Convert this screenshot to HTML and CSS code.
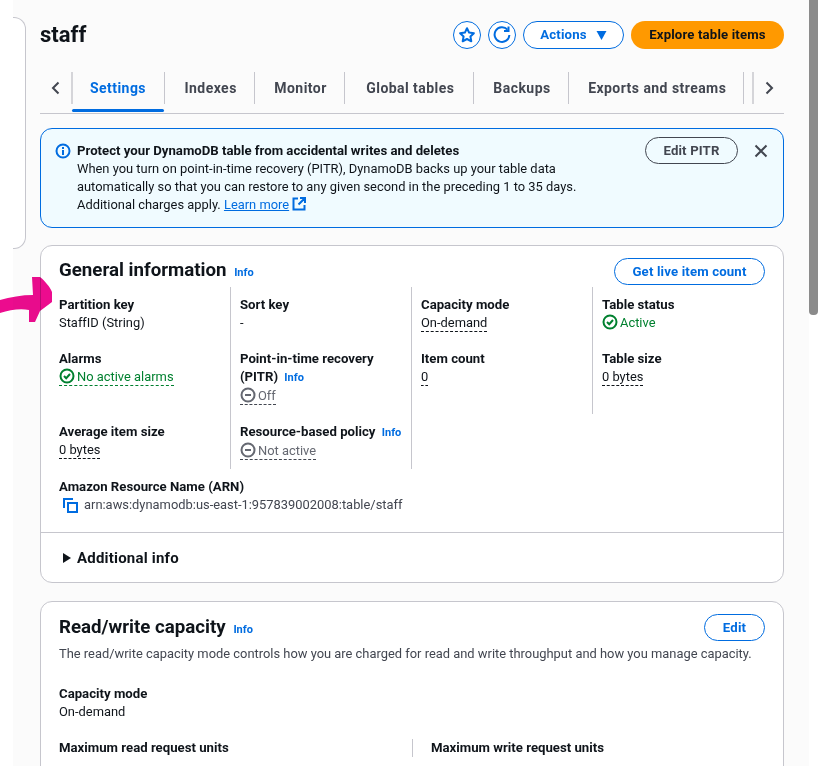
FILE: index.html
```html
<!DOCTYPE html>
<html lang="en">
<head>
<meta charset="utf-8">
<title>staff</title>
<link rel="stylesheet" href="styles.css">
</head>
<body>
<div class="window">
  <div class="canvas">
    <aside class="side"></aside>
    <main class="main">
      <header class="head">
        <h1>staff</h1>
        <div class="head-actions">
          <button class="btn round"><svg width="18" height="18" viewBox="0 0 18 18"><path d="M9 2.200l2.100 4.400 4.800.6-3.500 3.300.9 4.800L9 13l-4.300 2.300.9-4.800L2.100 7.200l4.800-.6z" fill="none" stroke="#006ce0" stroke-width="2" stroke-linejoin="round"/></svg></button>
          <button class="btn round"><svg width="20" height="20" viewBox="0 0 20 20"><path d="M15.500 4.600A7.400 7.400 0 1 0 17.400 10" fill="none" stroke="#006ce0" stroke-width="2"/><path d="M16.500 1.500v4.500H12" fill="none" stroke="#006ce0" stroke-width="2"/></svg></button>
          <button class="btn actions">Actions <svg width="11" height="9" viewBox="0 0 11 9"><path d="M.5 0h10L5.500 9z" fill="#006ce0"/></svg></button>
          <button class="btn primary">Explore table items</button>
        </div>
      </header>
      <nav class="tabs">
        <span class="tab-arrow left"><svg width="10" height="14" viewBox="0 0 10 14"><path d="M7.500 1.500 2 7l5.500 5.500" fill="none" stroke="#424650" stroke-width="2"/></svg></span>
        <a class="tab active">Settings</a>
        <a class="tab">Indexes</a>
        <a class="tab">Monitor</a>
        <a class="tab global">Global tables</a>
        <a class="tab">Backups</a>
        <a class="tab">Exports and streams</a>
        <span class="tab-arrow right"><svg width="10" height="14" viewBox="0 0 10 14"><path d="M2.500 1.500 8 7l-5.500 5.500" fill="none" stroke="#424650" stroke-width="2"/></svg></span>
      </nav>
      <section class="flash">
        <svg class="flash-icon" width="16" height="16" viewBox="0 0 16 16"><circle cx="8" cy="8" r="6.500" fill="none" stroke="#006ce0" stroke-width="2"/><path d="M8 7v5M8 4v2" stroke="#006ce0" stroke-width="2"/></svg>
        <div class="flash-body">
          <strong>Protect your DynamoDB table from accidental writes and deletes</strong>
          <p>When you turn on point-in-time recovery (PITR), DynamoDB backs up your table data automatically so that you can restore to any given second in the preceding 1 to 35 days. Additional charges apply. <a class="link">Learn more</a> <svg class="ext" width="14" height="14" viewBox="0 0 14 14"><path d="M6 1.500H1.500v11h11V8M8 1h5v5M13 1 6.500 7.500" fill="none" stroke="#006ce0" stroke-width="2"/></svg></p>
        </div>
        <button class="btn pitr">Edit PITR</button>
        <svg class="close" width="14" height="14" viewBox="0 0 14 14"><path d="M1.500 1.500l11 11M12.500 1.500l-11 11" stroke="#424650" stroke-width="2"/></svg>
      </section>
      <section class="card general">
        <div class="card-pad">
          <div class="card-head">
            <h2>General information <a class="info">Info</a></h2>
            <button class="btn normal">Get live item count</button>
          </div>
          <div class="grid">
            <div class="cell first"><b>Partition key</b><span>StaffID (String)</span></div>
            <div class="cell"><b>Sort key</b><span>-</span></div>
            <div class="cell"><b>Capacity mode</b><span><u>On-demand</u></span></div>
            <div class="cell last"><b>Table status</b><span class="ok"><svg class="st" width="16" height="16" viewBox="0 0 16 16"><circle cx="8" cy="8" r="6.500" fill="none" stroke="#00802f" stroke-width="2"/><path d="M5 8l2.200 2.200L11 6" fill="none" stroke="#00802f" stroke-width="2"/></svg>Active</span></div>

            <div class="cell first"><b>Alarms</b><span class="ok"><u class="green"><svg class="st" width="16" height="16" viewBox="0 0 16 16"><circle cx="8" cy="8" r="6.500" fill="none" stroke="#00802f" stroke-width="2"/><path d="M5 8l2.200 2.200L11 6" fill="none" stroke="#00802f" stroke-width="2"/></svg>No active alarms</u></span></div>
            <div class="cell"><b>Point-in-time recovery (PITR) <a class="info">Info</a></b><span class="off"><u><svg class="st" width="16" height="16" viewBox="0 0 16 16"><circle cx="8" cy="8" r="6.500" fill="none" stroke="#656871" stroke-width="2"/><path d="M5 8h6" stroke="#656871" stroke-width="2"/></svg>Off</u></span></div>
            <div class="cell"><b>Item count</b><span><u>0</u></span></div>
            <div class="cell last"><b>Table size</b><span><u>0 bytes</u></span></div>

            <div class="cell first"><b>Average item size</b><span><u>0 bytes</u></span></div>
            <div class="cell"><b>Resource-based policy <a class="info">Info</a></b><span class="off"><u><svg class="st" width="16" height="16" viewBox="0 0 16 16"><circle cx="8" cy="8" r="6.500" fill="none" stroke="#656871" stroke-width="2"/><path d="M5 8h6" stroke="#656871" stroke-width="2"/></svg>Not active</u></span></div>
          </div>
          <div class="arn">
            <b>Amazon Resource Name (ARN)</b>
            <span class="arn-val"><svg width="15" height="15" viewBox="0 0 15 15"><path d="M1 10V1h9" fill="none" stroke="#006ce0" stroke-width="2"/><path d="M5 5h9v9H5z" fill="none" stroke="#006ce0" stroke-width="2"/></svg>arn:aws:dynamodb:us-east-1:957839002008:table/staff</span>
          </div>
        </div>
        <div class="expander"><svg width="9" height="10" viewBox="0 0 9 10"><path d="M1 0l8 5-8 5z" fill="#0f141a"/></svg><span>Additional info</span></div>
      </section>
      <section class="card capacity">
        <div class="card-head">
          <h2>Read/write capacity <a class="info">Info</a></h2>
          <button class="btn normal edit">Edit</button>
        </div>
        <p class="desc">The read/write capacity mode controls how you are charged for read and write throughput and how you manage capacity.</p>
        <div class="cap-row"><b>Capacity mode</b><span>On-demand</span></div>
        <div class="cap-cols">
          <div class="cap-col"><b>Maximum read request units</b></div>
          <div class="cap-col second"><b>Maximum write request units</b></div>
        </div>
      </section>
    </main>
  </div>
  <div class="scrollbar"><div class="thumb"></div></div>
  <svg class="arrow" width="56" height="56" viewBox="0 0 56 56"><path d="M0 30C10 27 22 25 33 25L32 7h8C45 11 50 17 52 22V32L40 41 35 52H29V40C20 38 10 40 0 43Z" fill="#ec0c8e"/></svg>
</div>
</body>
</html>
```
FILE: styles.css
```css
* { box-sizing: border-box; }
html, body { margin: 0; padding: 0; background: #fff; }
body { font-family: "Roboto", "Noto Sans", sans-serif; font-size: 12.900px; line-height: 18px; color: #0f141a; overflow: hidden; }
.window { position: relative; width: 821px; height: 766px; overflow: hidden; }
.canvas { display: flex; width: 796px; height: 766px; margin-left: 13px; background: #fbfbfb; }
.side { flex: none; width: 13px; height: 232px; margin-top: 17px; background: #fff; border: 1px solid #c6c6cd; border-left: 0; border-radius: 0 12px 12px 0; }
.main { flex: none; width: 744px; margin-left: 14px; }
.head { display: flex; justify-content: space-between; align-items: center; height: 28px; margin-top: 21px; }
h1 { margin: 0; font-size: 22px; line-height: 28px; font-weight: 700; }
.head-actions { display: flex; align-items: center; gap: 7px; }
.btn { font-family: inherit; font-weight: 700; font-size: 13.200px; letter-spacing: .15px; line-height: 18px; display: inline-flex; align-items: center; justify-content: center; border-radius: 20px; background: #fff; border: 1.500px solid #006ce0; color: #006ce0; padding: 0; cursor: pointer; }
.round { width: 28px; height: 28px; }
.actions { width: 101px; height: 28px; gap: 9px; }
.primary { width: 153px; height: 28px; background: #f90; border: 0; color: #0f141a; }
.tabs { display: flex; align-items: flex-start; height: 42px; margin-top: 23px; border-bottom: 1px solid #c6c6cd; }
.tab-arrow { display: flex; align-items: center; justify-content: center; height: 32px; flex: none; }
.tab-arrow.left { width: 33px; border-right: 2px solid #d5d5d9; }
.tab-arrow.right { width: 31px; margin-left: 8px; border-left: 2px solid #d5d5d9; }
.tab { position: relative; display: flex; align-items: center; height: 32px; padding: 0 17px 0 19.500px; border-right: 1px solid #c6c6cd; font-weight: 700; font-size: 14px; letter-spacing: .45px; color: #424650; white-space: nowrap; }
.tab.active { color: #006ce0; padding: 0 18px 0 17px; }
.tab.global { padding: 0 18.500px 0 21.500px; }
.tab.active::after { content: ""; position: absolute; left: -1px; right: 0; top: 37px; height: 3px; background: #006ce0; border-radius: 2px; }
.flash { display: flex; align-items: flex-start; height: 100px; margin-top: 14px; padding: 8px 15px 8px 14px; background: #f0fbff; border: 1px solid #006ce0; border-radius: 12px; }
.flash-icon { flex: none; margin: 6px 6px 0 0; }
.flash-body { flex: none; width: 545px; }
.flash-body strong { display: block; font-size: 13.200px; padding-top: 5px; }
.flash-body p { margin: 0; }
.link { color: #006ce0; text-decoration: underline; }
.ext { vertical-align: -2px; }
.pitr { flex: none; width: 93px; height: 27px; margin-left: 23px; background: transparent; border: 1px solid #424650; color: #424650; }
.close { flex: none; margin: 7px 0 0 16px; }
.card { background: #fff; border: 1px solid #c6c6cd; border-radius: 12px; }
.general { margin-top: 17px; height: 338px; }
.card-pad { padding: 12px 18px 0; }
.card-head { display: flex; justify-content: space-between; align-items: flex-start; }
h2 { margin: 0; font-size: 18.700px; line-height: 24px; font-weight: 700; }
.capacity h2 { padding-top: 1px; }
.normal { height: 27px; width: 151px; }
.edit { width: 61px; }
.info { color: #006ce0; font-size: 11px; font-weight: 700; margin-left: 3px; }
.grid { display: grid; grid-template-columns: 172px 181px 181px 171px; grid-template-rows: 54px 73px 55px; margin-top: 2px; }
.cell { padding: 9px 4px 0 9px; border-right: 1px solid #c6c6cd; }
.cell.first { padding-left: 0; }
.cell.last { border-right: 0; }
b { display: block; font-size: 13.200px; font-weight: 700; }
.cell span, .cap-row span { display: block; }
u { text-decoration: none; display: inline-block; line-height: 16px; border-bottom: 1px dashed #0f141a; }
u.green { border-bottom-color: #00802f; }
.ok { color: #00802f; }
.off { color: #656871; }
.off u { border-bottom-color: #424650; }
.st { vertical-align: -3px; margin-right: 2px; width: 16px; height: 16px; }
.arn { margin-top: 9px; }
.arn-val { display: flex; align-items: center; gap: 6px; padding-left: 4px; color: #424650; }
.expander { display: flex; align-items: center; gap: 6px; height: 50px; margin-top: 18px; padding: 0 0 0 21px; border-top: 1px solid #c6c6cd; font-weight: 700; font-size: 15px; letter-spacing: .2px; }
.capacity { margin-top: 18px; padding: 12px 18px 0; height: 200px; }
.desc { margin: 3px 0 0; color: #424650; }
.cap-row { margin-top: 22px; }
.cap-cols { display: grid; grid-template-columns: 353px 1fr; margin-top: 18px; }
.cap-col.second { border-left: 1px solid #c6c6cd; padding-left: 18px; }
.scrollbar { position: absolute; left: 809px; top: 0; width: 9px; height: 766px; }
.thumb { height: 315px; background: #8b8b8b; border-radius: 0 0 4px 4px; }
.arrow { position: absolute; left: 0; top: 270px; mix-blend-mode: multiply; }
```
